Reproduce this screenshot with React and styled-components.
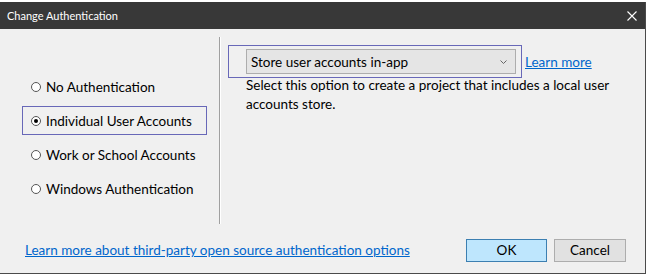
import React from "react";
import styled, { createGlobalStyle } from "styled-components";

const Global = createGlobalStyle`
  html, body { margin: 0; padding: 0; background: #ffffff; }
  body { font-family: "Lato", "Noto Sans", sans-serif; }
  * { box-sizing: border-box; }
`;

const Page = styled.div`
  width: 650px;
  height: 276px;
  padding-top: 2px;
  overflow: hidden;
  background: #ffffff;
`;

const Dialog = styled.div`
  width: 646px;
  height: 272px;
  background: #f0f0f0;
  border-right: 1px solid #4a4a4a;
  border-bottom: 1px solid #4a4a4a;
  display: flex;
  flex-direction: column;
`;

const TitleBar = styled.div`
  height: 27px;
  background: #383838;
  color: #ffffff;
  display: flex;
  align-items: center;
  justify-content: space-between;
  padding: 0 6px 0 7px;
  font-size: 11px;
  flex-shrink: 0;
`;

const CloseIcon = styled.svg`
  width: 10px;
  height: 10px;
  margin-right: 2px;
`;

const Body = styled.div`
  flex: 1;
  display: flex;
  flex-direction: column;
`;

const Main = styled.div`
  display: flex;
  height: 198px;
`;

const LeftCol = styled.div`
  width: 219px;
  padding: 43px 0 0 22px;
  display: flex;
  flex-direction: column;
  gap: 5px;
`;

const Option = styled.label`
  width: 185px;
  height: 29px;
  display: flex;
  align-items: center;
  gap: 5px;
  padding-left: 8px;
  border: 1px solid ${(p) => (p.$focused ? "#6868b8" : "transparent")};
  font-size: 13.5px;
  white-space: nowrap;
  color: #000;
`;

const Radio = styled.span`
  width: 10px;
  height: 10px;
  border-radius: 50%;
  border: 1px solid #555;
  background: #fff;
  display: flex;
  align-items: center;
  justify-content: center;
  flex-shrink: 0;
  &::after {
    content: "";
    width: 4px;
    height: 4px;
    border-radius: 50%;
    background: ${(p) => (p.$checked ? "#000" : "transparent")};
  }
`;

const Divider = styled.div`
  width: 2px;
  margin-top: 8px;
  height: 187px;
  border-left: 1px solid #a0a0a0;
  border-right: 1px solid #ffffff;
`;

const RightCol = styled.div`
  flex: 1;
  padding: 16px 0 0 7px;
  display: flex;
  flex-direction: column;
`;

const ComboRow = styled.div`
  display: flex;
  align-items: center;
  gap: 3px;
`;

const FocusBox = styled.div`
  width: 294px;
  height: 33px;
  border: 1px solid #6868b8;
  padding: 3px 5px 3px 17px;
`;

const Combo = styled.div`
  height: 25px;
  border: 1px solid #adadad;
  background: #e5e5e5;
  display: flex;
  align-items: center;
  justify-content: space-between;
  padding: 0 8px 0 4px;
  font-size: 13.5px;
  color: #000;
`;

const Chevron = styled.svg`
  width: 7px;
  height: 4px;
`;

const Link = styled.a`
  color: #0066cc;
  text-decoration: underline;
  font-size: 13.5px;
  white-space: nowrap;
  cursor: pointer;
`;

const Description = styled.p`
  margin: -2px 0 0 0;
  padding-left: 18px;
  font-size: 13.5px;
  line-height: 19px;
  white-space: nowrap;
  color: #000;
`;

const Footer = styled.div`
  flex: 1;
  display: flex;
  align-items: center;
  justify-content: space-between;
  padding: 0 19px 0 25px;
`;

const Buttons = styled.div`
  display: flex;
  gap: 7px;
`;

const Button = styled.button`
  height: 23px;
  width: ${(p) => p.$w}px;
  font-family: inherit;
  font-size: 13.5px;
  padding: 0;
  color: #000;
  background: ${(p) => (p.$primary ? "#bee6fd" : "#e1e1e1")};
  border: 1px solid ${(p) => (p.$primary ? "#3c7fb1" : "#adadad")};
`;

const options = [
  "No Authentication",
  "Individual User Accounts",
  "Work or School Accounts",
  "Windows Authentication",
];

export default function App() {
  return (
    <Page>
      <Global />
      <Dialog>
        <TitleBar>
          <span>Change Authentication</span>
          <CloseIcon viewBox="0 0 10 10">
            <path d="M0.5 0.5 L9.5 9.5 M9.5 0.5 L0.5 9.5" stroke="#fff" strokeWidth="1.1" />
          </CloseIcon>
        </TitleBar>
        <Body>
          <Main>
            <LeftCol>
              {options.map((o, i) => (
                <Option key={o} $focused={i === 1}>
                  <Radio $checked={i === 1} />
                  {o}
                </Option>
              ))}
            </LeftCol>
            <Divider />
            <RightCol>
              <ComboRow>
                <FocusBox>
                  <Combo>
                    <span>Store user accounts in-app</span>
                    <Chevron viewBox="0 0 7 4">
                      <path d="M0.5 0.5 L3.5 3.5 L6.5 0.5" stroke="#666" fill="none" />
                    </Chevron>
                  </Combo>
                </FocusBox>
                <Link>Learn more</Link>
              </ComboRow>
              <Description>
                Select this option to create a project that includes a local user
                <br />
                accounts store.
              </Description>
            </RightCol>
          </Main>
          <Footer>
            <Link>Learn more about third-party open source authentication options</Link>
            <Buttons>
              <Button $primary $w={81}>OK</Button>
              <Button $w={72}>Cancel</Button>
            </Buttons>
          </Footer>
        </Body>
      </Dialog>
    </Page>
  );
}
